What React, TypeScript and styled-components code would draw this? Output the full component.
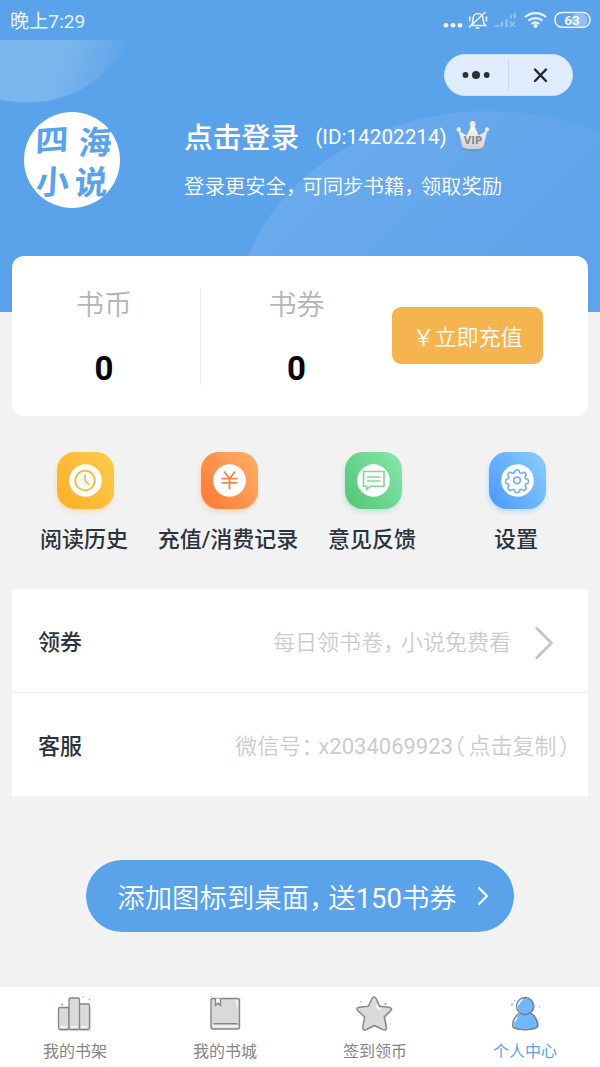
import React from "react";
import styled, { createGlobalStyle } from "styled-components";

const Global = createGlobalStyle`
  * { box-sizing: border-box; }
  body { margin: 0; background: #f2f2f2; }
  button { font: inherit; border: 0; padding: 0; margin: 0; background: none; color: inherit; }
`;

const Page = styled.div`
  width: 600px;
  height: 1067px;
  display: flex;
  flex-direction: column;
  overflow: hidden;
  background: #f2f2f2;
  font-family: Roboto, "Noto Sans CJK SC", sans-serif;
  white-space: nowrap;
`;

const StatusBar = styled.div`
  height: 40px;
  flex: none;
  display: flex;
  align-items: center;
  justify-content: space-between;
  padding: 0 9px 0 10px;
  background: #5aa2e9;
  color: #e9f3fd;
  font-size: 19.2px;
`;

const Clock = styled.span`
  line-height: 36px;
  padding-top: 3px;
`;

const Hero = styled.header`
  position: relative;
  height: 272px;
  flex: none;
  background: #5aa2e9;
  color: #fff;
`;

const HeroArt = styled.svg`
  position: absolute;
  inset: 0;
`;

const Capsule = styled.div`
  position: absolute;
  left: 444px;
  top: 14px;
  width: 129px;
  height: 42px;
  border-radius: 21px;
  background: #deecfb;
  border: 1px solid #cfe2f6;
`;

const Profile = styled.div`
  position: relative;
  display: flex;
  padding: 72px 0 0 24px;
  gap: 64px;
`;

const Avatar = styled.svg`
  flex: none;
`;

const ProfileText = styled.div`
  display: flex;
  flex-direction: column;
  padding-top: 5px;
`;

const NameRow = styled.div`
  display: flex;
  align-items: center;
  height: 40px;
`;

const Name = styled.span`
  font-size: 28.8px;
  font-weight: 500;
  line-height: 36px;
  padding-top: 1px;
`;

const UserId = styled.span`
  margin-left: 16px;
  font-size: 20.7px;
`;

const CrownIcon = styled.svg`
  margin: -2px 0 0 9px;
`;

const Subtitle = styled.div`
  font-size: 20.4px;
  font-weight: 350;
  line-height: 30px;
  margin-top: 13px;
`;

/* Half-width punctuation with its own side spacing */
const Punct = styled.span<{ $before?: number; $after?: number }>`
  font-family: "Noto Sans CJK SC", sans-serif;
  font-feature-settings: "halt" 1;
  margin-left: ${(p) => p.$before ?? 0}px;
  margin-right: ${(p) => p.$after ?? 0}px;
`;

const Latin = styled.span`
  font-weight: 400;
`;

const Wallet = styled.section`
  position: relative;
  display: flex;
  align-items: center;
  flex: none;
  margin: -56px 12px 0;
  height: 160px;
  border-radius: 12px;
  background: #fff;
`;

const Balance = styled.div<{ $divided?: boolean }>`
  width: ${(p) => (p.$divided ? 189 : 191)}px;
  height: 97px;
  display: flex;
  flex-direction: column;
  align-items: center;
  border-right: ${(p) => (p.$divided ? "1px solid #e8e8e8" : "0")};
  padding-right: ${(p) => (p.$divided ? 4 : 0)}px;
`;

const BalanceLabel = styled.div`
  font-size: 28px;
  font-weight: 350;
  line-height: 32px;
  padding-top: 2px;
  color: #b5b5b5;
`;

const BalanceValue = styled.div`
  margin-top: 27px;
  font-size: 33px;
  line-height: 40px;
  font-weight: 700;
  color: #000;
`;

const Recharge = styled.button`
  width: 151px;
  height: 57px;
  margin-bottom: 2px;
  border-radius: 9px;
  background: #f6b450;
  color: #fff;
  font-size: 22px;
  font-weight: 350;
  padding-bottom: 1px;
`;

const Shortcuts = styled.nav`
  display: grid;
  grid-template-columns: repeat(4, 144px);
  justify-content: center;
  padding-top: 36px;
  height: 173px;
  flex: none;
`;

const Shortcut = styled.div`
  display: flex;
  flex-direction: column;
  align-items: center;
  color: #2b343e;
  font-size: 22px;
  font-weight: 500;
  line-height: 32px;
  gap: 15px;
`;

const Tile = styled.div<{ $from: string; $to: string; $glow: string }>`
  width: 57px;
  height: 57px;
  margin-left: 2px;
  border-radius: 18px;
  background: linear-gradient(55deg, ${(p) => p.$from}, ${(p) => p.$to});
  box-shadow: -1px 3px 4px ${(p) => p.$glow};
  display: grid;
  place-items: center;
`;

const List = styled.section`
  margin: 0 12px;
  flex: none;
  background: #fff;
`;

const ListRow = styled.div<{ $last?: boolean }>`
  height: ${(p) => (p.$last ? 103 : 104)}px;
  display: flex;
  align-items: center;
  padding: 0 ${(p) => (p.$last ? 18 : 34)}px 1px 26px;
  border-bottom: ${(p) => (p.$last ? "0" : "1px solid #eee")};
  font-size: 22px;
`;

const RowTitle = styled.span`
  flex: 1;
  font-weight: 500;
  color: #2b343e;
`;

const RowHint = styled.span`
  color: #cbcbcb;
  font-weight: 350;
`;

const Chevron = styled.svg`
  margin: 6px 0 0 23px;
`;

const AddButton = styled.button`
  flex: none;
  align-self: center;
  display: flex;
  align-items: center;
  justify-content: center;
  width: 428px;
  height: 72px;
  margin-top: 64px;
  padding-left: 6px;
  border-radius: 36px;
  background: #5aa2e9;
  color: #fff;
  font-size: 27.4px;
  font-weight: 350;
  gap: 20px;
`;

const TabBar = styled.nav`
  display: grid;
  grid-template-columns: repeat(4, 1fr);
  height: 80px;
  margin-top: auto;
  flex: none;
  background: #fff;
`;

const Tab = styled.div<{ $active?: boolean }>`
  display: flex;
  flex-direction: column;
  align-items: center;
  padding-top: 7px;
  gap: 5px;
  font-size: 16px;
  line-height: 25px;
  color: ${(p) => (p.$active ? "#5aa2e9" : "#858585")};
`;

const StatusIcons = () => (
  <svg width="150" height="40" viewBox="441 0 150 40" fill="none" stroke="#e9f3fd" strokeWidth="1.6">
    <g fill="#f2f8fe" stroke="none">
      <circle cx="446" cy="25.3" r="2.4" />
      <circle cx="453" cy="25.3" r="2.4" />
      <circle cx="460" cy="25.3" r="2.4" />
    </g>
    <path d="M471 25.500h14.500c-2-2-2.500-4-2.500-6.500 0-3-2-5.500-5-5.500s-5 2.500-5 5.500c0 2.500 0 4.500-2 6.500zM475.500 28h4M485.500 12L469 27.500M469.800 16.500v5M486.500 16.500v5" />
    <g fill="#8fc0f1" stroke="none">
      <path d="M494.500 27v-1l4-1.500V27zM500.500 27v-4.500l2.500-1V27zM505.300 27v-7l2.500-1.500V27zM510 18.500v-2.500l2-1.500v4zM513.500 18.500v-5l2.500-1.500v6.500z" />
    </g>
    <path d="M510 21.500l5 5.500M515 21.500l-5 5.500" stroke="#8fc0f1" />
    <path d="M525 17c6-5.300 15-5.300 21 0M528.500 20.700c4-3.500 10-3.500 14 0M531.800 24c2-2 5.400-2 7.400 0" strokeWidth="2.300" />
    <circle cx="535.500" cy="26" r="2" fill="#e9f3fd" stroke="none" />
    <rect x="571" y="13.500" width="16.500" height="13" rx="6" fill="#8fc0f1" stroke="none" />
    <rect x="555" y="12.500" width="35" height="14.800" rx="7" />
    <text x="572" y="24.600" textAnchor="middle" fontFamily="Roboto" fontWeight="700" fontSize="13.500" fill="#f4f9fe" stroke="none">63</text>
  </svg>
);

const Crown = () => (
  <CrownIcon width="34" height="32" viewBox="0 0 34 32">
    <defs>
      <linearGradient id="silver" x1="0" y1="0" x2="0" y2="1">
        <stop offset="0" stopColor="#fff" />
        <stop offset="1" stopColor="#d0d0d0" />
      </linearGradient>
    </defs>
    <path d="M7 28.500q10 3 20 0" fill="none" stroke="#6c8fb6" strokeWidth="2.400" opacity="0.600" />
    <path d="M2.500 10.500L10.800 15.500l5.200-11.500h1.500L22.700 15.500l8.500-5-3.500 15.500q-.5 2-3 2.500-8 1-15.500 0-2.500-.5-3-2.500z" fill="url(#silver)" />
    <circle cx="2.800" cy="9.500" r="2.200" fill="#ececec" />
    <circle cx="16.700" cy="4" r="2.900" fill="#ececec" />
    <circle cx="31" cy="9.500" r="2.200" fill="#ececec" />
    <text x="17" y="24" textAnchor="middle" fontFamily="DejaVu Sans" fontWeight="700" fontSize="9.800" fill="#8a8a8a">VIP</text>
  </CrownIcon>
);

const tiles = [
  {
    label: "阅读历史", from: "#ffae26", to: "#fdcc4b", glow: "rgba(253,185,50,.28)", color: "#fbb935",
    icon: <><circle cx="16" cy="16.500" r="9.800" strokeWidth="1.800" /><path d="M16 10.500v6l4.500 4.500" strokeWidth="1.700" /></>,
  },
  {
    label: "充值/消费记录", from: "#ff7833", to: "#ffb069", glow: "rgba(255,140,70,.28)", color: "#fb8341",
    icon: <path d="M11 7.500l5.500 7 5.500-7M8.500 14.700h16M8.500 18.800h16M16.500 14.500V25.500" strokeWidth="1.800" />,
  },
  {
    label: "意见反馈", from: "#52c476", to: "#86e8ab", glow: "rgba(80,205,125,.28)", color: "#7fd79c",
    icon: <path d="M6.500 7.500h20.500v14.800H13.500l-3.700 3v-3H6.500zM10 13h13.500M10 17h13.500" strokeWidth="1.600" />,
  },
  {
    label: "设置", from: "#4b98ff", to: "#8bcdff", glow: "rgba(80,160,255,.28)", color: "#6eb0fa",
    icon: (
      <>
        <circle cx="16" cy="16.300" r="3.300" strokeWidth="1.600" />
        <path d="M14 6.500q2-1.400 4 0l.6 2.200 1.700.7 2.100-1.200q2.600.3 2.800 3l-1.200 2 .7 1.600 2.100.6q1.300 2 0 4l-2.100.6-.7 1.600 1.200 2q-.2 2.600-2.800 2.900l-2.100-1.200-1.700.7-.6 2.100q-2 1.300-4 0l-.6-2.100-1.700-.7-2.100 1.200q-2.500-.3-2.800-2.900l1.200-2-.7-1.600-2.100-.6q-1.300-2 0-4l2.100-.6.7-1.600-1.200-2q.3-2.700 2.800-3l2.100 1.200 1.700-.7z" strokeWidth="1.500" strokeLinejoin="round" />
      </>
    ),
  },
];

const Shelf = () => (
  <svg width="40" height="40" viewBox="4 0 40 40" stroke="#858585" strokeWidth="1.300" fill="#d9d9d9">
    <path d="M9 36.500h30.500v-24" stroke="#e2e2e2" fill="none" />
    <rect x="7.500" y="13.500" width="10.500" height="22" rx="1.500" />
    <rect x="28" y="10" width="10.500" height="25.500" rx="1.500" />
    <rect x="18" y="4" width="10.500" height="31.500" rx="1.500" />
    <path d="M9.500 33h6.500M20 33h6.500M30 33h6.500" stroke="#f5f5f5" strokeWidth="2" />
    <g fill="#66b5f8" stroke="none"><circle cx="11" cy="10.500" r="1.100" /><circle cx="32" cy="3" r=".7" /><circle cx="38.500" cy="5.500" r=".8" /></g>
  </svg>
);

const Book = () => (
  <svg width="40" height="40" viewBox="0 0 40 40" stroke="#858585" strokeWidth="1.400" fill="#d9d9d9">
    <rect x="6" y="4.500" width="28.500" height="30.500" rx="2" />
    <path d="M7.200 32.300h26" stroke="#f0f0f0" strokeWidth="2.500" />
    <path d="M8.500 29.700h24" />
    <path d="M10.500 4.500v7l2.500-2.200 2.500 2.200v-7" fill="#fff" />
    <path d="M30 6.500q2 0 2 2v5" stroke="#f5f5f5" fill="none" />
    <g fill="#66b5f8" stroke="none"><circle cx="6.500" cy="2.500" r=".6" /><circle cx="37" cy="4" r=".5" /></g>
  </svg>
);

const starPath =
  "M16.800 4.800Q19 1 21.200 4.800L24.600 12.300 33.500 13.200Q38.500 14 35 17.200L29.300 22.800 31.300 33Q31.500 37 28 35.600L19.300 31.500 11 35.600Q7.500 37 7.800 33L9.600 22.800 3.300 17.200Q0 14 4.300 13.200L13.400 12.300Z";

const Star = () => (
  <svg width="40" height="40" viewBox="0 0 40 40">
    <path d={starPath} transform="translate(1.500 .8)" fill="#dedede" />
    <path d={starPath} fill="#dadada" stroke="#858585" strokeWidth="1.400" strokeLinejoin="round" />
    <path d="M21.500 10.500q.8 4 4.500 5" stroke="#fff" strokeWidth="1.300" fill="none" />
    <g fill="#66b5f8"><circle cx="30.500" cy="9.800" r="1.100" /><circle cx="6" cy="7.500" r=".8" /><circle cx="35.500" cy="30" r=".6" /></g>
  </svg>
);

const Person = () => (
  <svg width="40" height="40" viewBox="0 0 40 40">
    <path d="M14.500 19.500h13c4 3 6.500 8 6.500 12.500 0 5.500-25.500 5.500-25.500 0 0-4.500 2-10 6-12.500z" fill="#6fb8fb" />
    <circle cx="21.200" cy="12.200" r="8.500" fill="#6fb8fb" />
    <path d="M14.500 19C10 21.500 7.500 27 7.500 31.500c0 5.700 25 5.700 25 0 0-4.500-2.500-10-7-12.500" fill="none" stroke="#7b7f85" strokeWidth="1.300" />
    <circle cx="20" cy="12" r="8.500" fill="none" stroke="#7b7f85" strokeWidth="1.300" />
    <path d="M13.700 11q.8-4 4-5.500M10 28q.8-3 2.500-5" stroke="#fff" strokeWidth="1.100" fill="none" />
    <g fill="#66b5f8"><circle cx="7" cy="10.500" r="1" /><circle cx="9.500" cy="6.500" r=".7" /><circle cx="34.500" cy="13" r=".7" /><circle cx="34.500" cy="25" r=".6" /></g>
  </svg>
);

export default function App() {
  return (
    <Page>
      <Global />
      <StatusBar>
        <Clock>晚上7:29</Clock>
        <StatusIcons />
      </StatusBar>
      <Hero>
        <HeroArt width="600" height="272" viewBox="0 40 600 272">
          <defs>
            <linearGradient id="glow" gradientUnits="userSpaceOnUse" x1="62" y1="60" x2="124" y2="82">
              <stop offset="0" stopColor="#fff" stopOpacity=".21" />
              <stop offset="1" stopColor="#fff" stopOpacity="0" />
            </linearGradient>
            <linearGradient id="arc" gradientUnits="userSpaceOnUse" x1="330" y1="140" x2="520" y2="330">
              <stop offset="0" stopColor="#fff" stopOpacity=".1" />
              <stop offset="1" stopColor="#b0b8ff" stopOpacity=".05" />
            </linearGradient>
          </defs>
          <ellipse cx="27" cy="8" rx="107" ry="94.500" fill="url(#glow)" />
          <ellipse cx="489" cy="326" rx="255" ry="215" fill="url(#arc)" />
        </HeroArt>
        <Profile>
          <Avatar width="96" height="96" viewBox="0 0 96 96">
            <circle cx="48" cy="48" r="48" fill="#fff" />
            <g fill="#5aa2e9" fontFamily="Noto Sans CJK SC" fontWeight="600" fontSize="33" textAnchor="middle">
              <text transform="translate(27.500 39) skewX(-6) rotate(-4) scale(1 .92)">四</text>
              <text transform="translate(70.500 42.500) skewX(-6) rotate(-3)">海</text>
              <text transform="translate(28 82) skewX(-6) rotate(-3)">小</text>
              <text transform="translate(66.500 82.500) skewX(-6) rotate(-3)">说</text>
            </g>
          </Avatar>
          <ProfileText>
            <NameRow>
              <Name>点击登录</Name>
              <UserId>(ID:14202214)</UserId>
              <Crown />
            </NameRow>
            <Subtitle>
              登录更安全<Punct $after={6.2}>，</Punct>可同步书籍<Punct $after={6.2}>，</Punct>领取奖励
            </Subtitle>
          </ProfileText>
        </Profile>
        <Capsule>
          <svg width="127" height="40" viewBox="445 55 127 40">
            <g fill="#2c2f33"><circle cx="465.500" cy="75" r="2.900" /><circle cx="476" cy="75" r="4" /><circle cx="486.700" cy="75" r="2.900" /></g>
            <path d="M508.500 59v32" stroke="#c5d7ea" />
            <path d="M535 69.500l11 11.500M546 69.500l-11 11.500" stroke="#24272a" strokeWidth="2.400" strokeLinecap="round" />
          </svg>
        </Capsule>
      </Hero>
      <Wallet>
        <Balance $divided>
          <BalanceLabel>书币</BalanceLabel>
          <BalanceValue>0</BalanceValue>
        </Balance>
        <Balance>
          <BalanceLabel>书券</BalanceLabel>
          <BalanceValue>0</BalanceValue>
        </Balance>
        <Recharge>￥立即充值</Recharge>
      </Wallet>
      <Shortcuts>
        {tiles.map((t) => (
          <Shortcut key={t.label}>
            <Tile $from={t.from} $to={t.to} $glow={t.glow}>
              <svg width="33" height="33" viewBox="0 0 33 33" fill="none" stroke={t.color}>
                <circle cx="16.500" cy="16.500" r="16.300" fill="#fff" stroke="none" />
                {t.icon}
              </svg>
            </Tile>
            <span>{t.label}</span>
          </Shortcut>
        ))}
      </Shortcuts>
      <List>
        <ListRow>
          <RowTitle>领券</RowTitle>
          <RowHint>每日领书卷<Punct $after={7}>，</Punct>小说免费看</RowHint>
          <Chevron width="20" height="34" viewBox="0 0 20 34" fill="none" stroke="#c4c4c4" strokeWidth="2.600">
            <path d="M2 1.500L17.500 17 2 32.500" />
          </Chevron>
        </ListRow>
        <ListRow $last>
          <RowTitle>客服</RowTitle>
          <RowHint>
            微信号<Punct $after={6}>：</Punct><Latin>x2034069923</Latin><Punct $before={1} $after={3.5}>（</Punct>点击复制<Punct $before={2.5}>）</Punct>
          </RowHint>
        </ListRow>
      </List>
      <AddButton>
        <span>添加图标到桌面<Punct $after={5.5}>，</Punct>送<Latin>150</Latin>书券</span>
        <svg width="12" height="20" viewBox="0 0 12 20" fill="none" stroke="#fff" strokeWidth="2.200">
          <path d="M1.500 1.500L10 10l-8.500 8.500" />
        </svg>
      </AddButton>
      <TabBar>
        <Tab><Shelf />我的书架</Tab>
        <Tab><Book />我的书城</Tab>
        <Tab><Star />签到领币</Tab>
        <Tab $active><Person />个人中心</Tab>
      </TabBar>
    </Page>
  );
}
